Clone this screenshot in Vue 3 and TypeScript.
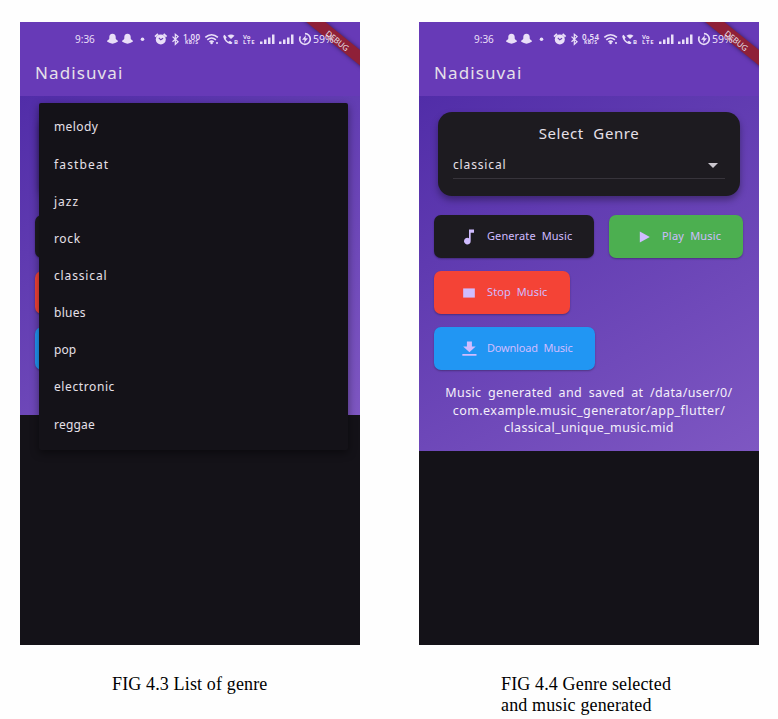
<script setup lang="ts">
interface Genre {
  name: string
  spacing: number
}

interface Phone {
  id: string
  speed: string
  menuOpen: boolean
  message: string[]
  caption: string[]
}

const genres: Genre[] = [
  { name: 'melody', spacing: 0.4 },
  { name: 'fastbeat', spacing: 1.15 },
  { name: 'jazz', spacing: 1 },
  { name: 'rock', spacing: 0.65 },
  { name: 'classical', spacing: 0.85 },
  { name: 'blues', spacing: 0.3 },
  { name: 'pop', spacing: 0.1 },
  { name: 'electronic', spacing: 0.6 },
  { name: 'reggae', spacing: 0.2 },
]

const phones: Phone[] = [
  { id: 'list', speed: '1.00', menuOpen: true, message: [], caption: ['FIG 4.3 List of genre'] },
  {
    id: 'generated',
    speed: '0.54',
    menuOpen: false,
    message: [
      'Music generated and saved at /data/user/0/',
      'com.example.music_generator/app_flutter/',
      'classical_unique_music.mid',
    ],
    caption: ['FIG 4.4 Genre selected', 'and music generated'],
  },
]
</script>

<template>
  <main class="sheet">
    <figure v-for="phone in phones" :key="phone.id" class="figure" :class="phone.id">
      <div class="phone">
        <header class="app-bar">
          <div class="status">
            <span class="time">9:36</span>
            <svg class="status-icons" width="200" height="16" viewBox="0 0 200 16" fill="#e9dff8">
              <path d="M6.500 2.800c2.200 0 3.200 1.500 3.200 3.200v1.600c0 1 2.300 1.800 2.300 2.700s-1.900.9-2.300 1.500c-1 .1-1.800.9-3.200.9s-2.200-.8-3.200-.9c-.4-.6-2.300-.6-2.300-1.500s2.300-1.700 2.300-2.700V6c0-1.700 1-3.200 3.200-3.200z" />
              <path transform="translate(15 0)" d="M6.500 2.800c2.200 0 3.200 1.500 3.200 3.200v1.600c0 1 2.300 1.800 2.300 2.700s-1.900.9-2.300 1.500c-1 .1-1.800.9-3.200.9s-2.200-.8-3.200-.9c-.4-.6-2.300-.6-2.300-1.500s2.300-1.700 2.300-2.700V6c0-1.700 1-3.200 3.200-3.200z" />
              <circle cx="36.500" cy="8.200" r="1.800" />
              <circle cx="54.800" cy="8.400" r="5" />
              <path d="M49 5.600l3-2.600M60.600 5.600l-3-2.600" stroke="#e9dff8" stroke-width="1.800" />
              <path d="M52.800 6.800l2 2 2.300-1.500" fill="none" stroke="#673ab7" stroke-width="1.100" />
              <path d="M66.500 5.600l5.600 5.200-2.800 2.500V3.300l2.800 2.300-5.600 5.200" fill="none" stroke="#e9dff8" stroke-width="1.200" />
              <text x="77" y="8.600" class="speed" textLength="17">{{ phone.speed }}</text>
              <text x="79" y="13" class="unit" textLength="13">KB/S</text>
              <g fill="none" stroke="#e9dff8" stroke-width="1.600">
                <path d="M99.300 6.400c3.800-3.400 8.800-3.400 12.600 0M101.300 8.800c2.600-2.200 6-2.200 8.600 0" />
                <path d="M103.400 11c1.500-1.200 2.900-1.200 4.300 0" />
              </g>
              <circle cx="105.600" cy="12" r="1.300" /><circle cx="111" cy="12" r="1" />
              <path d="M118.600 3.800c-1.100.5-1.500 1.400-1.200 2.500.8 3.300 3.300 5.800 6.600 6.600 1.100.3 2-.1 2.500-1.200l-2.500-1.900-1.500 1c-1.200-.6-2.200-1.600-2.800-2.800l1-1.500z" />
              <path d="M121.500 4.700c2.300-1.700 4.700-1.700 7 0L125 8z" />
              <text x="128" y="13" class="tiny">B</text>
              <text x="137" y="7.800" class="tiny">Vo</text>
              <text x="137" y="13" class="tiny" textLength="11.500">LTE</text>
              <path d="M154 10.500h2.500V13H154zM158 8.500h2.500V13H158zM162 6.500h2.500V13H162zM166 3.500h2.500V13H166z" />
              <path d="M173 10.500h2.500V13H173zM177 8.500h2.500V13H177zM181 6.500h2.500V13H181zM185 3.500h2.500V13H185z" />
            </svg>
            <svg class="battery" width="14" height="16" viewBox="0 0 14 16">
              <circle cx="7" cy="8" r="5.300" fill="none" stroke="#e9dff8" stroke-width="1.700" stroke-dasharray="28 5.300" stroke-dashoffset="9" />
              <path d="M8 4L4 8.700h2.600L6 12l4-4.700H7.400z" fill="#e9dff8" />
            </svg>
            <span class="percent">59%</span>
          </div>
          <h1 class="title">Nadisuvai</h1>
        </header>

        <section class="body">
          <div class="card">
            <h2 class="card-title">Select Genre</h2>
            <div class="select">
              <span>classical</span>
              <svg width="10" height="5" viewBox="0 0 10 5"><path d="M0 0h10L5 5z" fill="#cac6cd" /></svg>
            </div>
          </div>

          <div class="actions">
            <button class="btn generate">
              <svg width="20" height="20" viewBox="0 0 24 24"><path d="M12 3v10.550A4 4 0 1 0 14 17V7h4V3z" /></svg>
              <span>Generate Music</span>
            </button>
            <button class="btn play">
              <svg width="20" height="20" viewBox="0 0 24 24"><path d="M7 5.500v13l12-6.500z" /></svg>
              <span>Play Music</span>
            </button>
            <button class="btn stop">
              <svg width="20" height="20" viewBox="0 0 24 24"><path d="M5 6.500h14v11H5z" /></svg>
              <span>Stop Music</span>
            </button>
            <button class="btn download">
              <svg width="20" height="20" viewBox="0 0 24 24"><path d="M20 9h-4.500V3h-6v6H5l7.500 7zM4 18v2h17v-2z" /></svg>
              <span>Download Music</span>
            </button>
          </div>

          <p class="message">
            <span v-for="(line, i) in phone.message" :key="line" :class="'line' + i">{{ line }}</span>
          </p>
        </section>

        <ul v-if="phone.menuOpen" class="menu">
          <li v-for="genre in genres" :key="genre.name" :style="{ letterSpacing: genre.spacing + 'px' }">{{ genre.name }}</li>
        </ul>
        <div class="ribbon">DEBUG</div>
      </div>
      <figcaption class="caption">
        <span v-for="line in phone.caption" :key="line">{{ line }}</span>
      </figcaption>
    </figure>
  </main>
</template>

<style>
body {
  background: #fefefe;
}
</style>

<style scoped>
.sheet {
  display: flex;
  gap: 59px;
  width: 778px;
  height: 719px;
  box-sizing: border-box;
  padding: 22px 0 0 20px;
  overflow: hidden;
}
.figure {
  margin: 0;
  width: 340px;
}
.phone {
  position: relative;
  height: 623px;
  overflow: hidden;
  background: #141218;
  font-family: "Noto Sans", sans-serif;
  color: #e6e0e9;
}
.app-bar {
  height: 74px;
  background: #673ab7;
}
.status {
  position: relative;
  z-index: 2;
  display: flex;
  align-items: center;
  height: 33px;
  padding-left: 55px;
  font-size: 10px;
  color: #e9dff8;
}
.time {
  width: 30.500px;
  font-size: 10px;
}
.status-icons {
  flex: none;
  width: 200px;
  margin-right: -8px;
}
.battery {
  flex: none;
}
.percent {
  margin-left: 1.500px;
  font-size: 10.500px;
}
.speed {
  font-size: 8px;
  font-weight: 600;
}
.unit {
  font-size: 5px;
  font-weight: 700;
}
.tiny {
  font-size: 6px;
  font-weight: 700;
}
.title {
  margin: 6px 0 0 15px;
  font-size: 17px;
  font-weight: 400;
  line-height: 24px;
  letter-spacing: 1.100px;
}
.body {
  padding: 16px 15px 13px;
  background: linear-gradient(150deg, #512da8, #7e57c2);
}
.card {
  box-sizing: border-box;
  height: 84px;
  margin: 0 4px;
  padding: 11px 15px 0;
  border-radius: 14px;
  background: #1d1b20;
  box-shadow: 0 4px 7px rgba(0, 0, 0, 0.350);
}
.card-title {
  margin: 0;
  font-size: 15px;
  font-weight: 400;
  line-height: 20px;
  text-align: center;
  letter-spacing: 0.600px;
  word-spacing: 5px;
}
.select {
  display: flex;
  align-items: center;
  justify-content: space-between;
  box-sizing: border-box;
  height: 36px;
  padding: 7px 7px 0 0;
  border-bottom: 1px solid #37343b;
  font-size: 12px;
  letter-spacing: 0.850px;
}
.select svg {
  margin-top: 3px;
}
.actions {
  display: flex;
  flex-wrap: wrap;
  gap: 13px 15px;
  margin: 19px -2px 0 0;
}
.btn {
  display: flex;
  align-items: center;
  box-sizing: border-box;
  height: 43px;
  padding: 0 0 0 25px;
  gap: 8px;
  border: 0;
  border-radius: 7px;
  font: 11px "Noto Sans", sans-serif;
  letter-spacing: 0.100px;
  word-spacing: 3px;
  white-space: nowrap;
  color: #d0bcff;
  box-shadow: 0 1px 2px rgba(0, 0, 0, 0.300);
}
.btn span {
  padding-bottom: 2px;
}
.btn svg {
  flex: none;
  fill: #d0bcff;
}
.generate {
  width: 160px;
  background: #1d1b20;
}
.play {
  width: 134px;
  background: #4caf50;
  letter-spacing: 0.200px;
}
.stop {
  width: 136px;
  margin-right: 100px;
  background: #f44336;
}
.download {
  width: 161px;
  background: #2196f3;
  letter-spacing: -0.200px;
}
.message {
  display: flex;
  flex-direction: column;
  align-items: center;
  min-height: 17px;
  margin: 14px 0 0;
  padding-bottom: 1px;
  font-size: 12.500px;
  line-height: 17.700px;
  white-space: nowrap;
  color: #f4effa;
}
.line0 {
  letter-spacing: 0.360px;
  word-spacing: 3px;
}
.line1 {
  letter-spacing: 0.450px;
}
.line2 {
  letter-spacing: 0.360px;
}
.menu {
  position: absolute;
  top: 81px;
  left: 19px;
  box-sizing: border-box;
  width: 309px;
  height: 347px;
  margin: 0;
  padding: 5.400px 15px;
  list-style: none;
  border-radius: 2px;
  background: #141218;
  box-shadow: 0 3px 9px rgba(0, 0, 0, 0.450);
  font-size: 12px;
}
.menu li {
  height: 37.150px;
  line-height: 37px;
}
.ribbon {
  position: absolute;
  top: 12px;
  right: -28px;
  width: 100px;
  height: 12px;
  background: #8f2038;
  box-shadow: 0 0 4px rgba(0, 0, 0, 0.500);
  font-size: 8px;
  font-weight: 400;
  line-height: 13px;
  text-align: center;
  transform: rotate(39deg);
}
.caption {
  display: flex;
  flex-direction: column;
  padding: 29px 0 0 92px;
  font-family: "Liberation Serif", serif;
  font-size: 18px;
  line-height: 21px;
  letter-spacing: 0.140px;
  white-space: nowrap;
  color: #000;
}
.generated .caption {
  padding-left: 82px;
}
</style>
